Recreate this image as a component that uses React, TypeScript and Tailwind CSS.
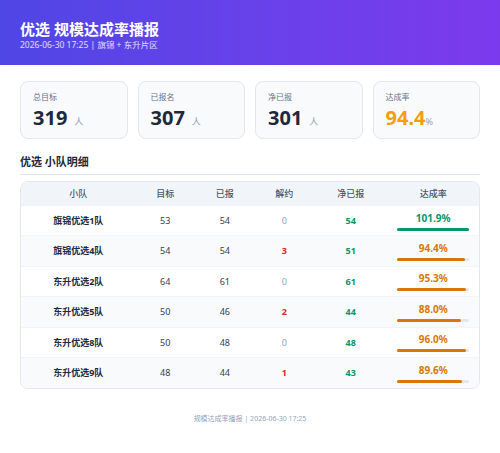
const teams = [
  { name: '旗锦优选1队', target: 53, reported: 54, cancel: 0, net: 54, rate: 101.9 },
  { name: '旗锦优选4队', target: 54, reported: 54, cancel: 3, net: 51, rate: 94.4 },
  { name: '东升优选2队', target: 64, reported: 61, cancel: 0, net: 61, rate: 95.3 },
  { name: '东升优选5队', target: 50, reported: 46, cancel: 2, net: 44, rate: 88.0 },
  { name: '东升优选8队', target: 50, reported: 48, cancel: 0, net: 48, rate: 96.0 },
  { name: '东升优选9队', target: 48, reported: 44, cancel: 1, net: 43, rate: 89.6 },
];

const cols = 'grid grid-cols-[25fr_13fr_13fr_13fr_16fr_20fr] items-center text-center';

function StatCard({ label, value, unit, accent }: { label: string; value: string; unit: string; accent?: boolean }) {
  return (
    <div className="flex h-[58px] flex-1 flex-col rounded-lg border border-[#e2e8f0] bg-[#f8fafc] pl-[12px] pt-[9px]">
      <div className="h-[12px] text-[8px] leading-[12px] text-[#64748b]">{label}</div>
      <div className="mt-[3px] flex h-[24px] items-baseline leading-[24px]">
        <span className={`text-[20px] font-bold leading-[24px] ${accent ? 'text-[#f59e0b]' : 'text-[#1e293b]'}`}>{value}</span>
        <span className={`text-[9px] leading-[24px] text-[#94a3b8] ${accent ? '' : 'ml-[7px]'}`}>{unit}</span>
      </div>
    </div>
  );
}

export default function App() {
  return (
    <div className="min-h-[453px] w-[500px] bg-white font-['Noto_Sans','Noto_Sans_CJK_SC',sans-serif]">
      {/* header */}
      <div className="h-[65px] bg-gradient-to-r from-[#4f46e5] to-[#7c3aed] px-[20px] pt-[20px] text-white">
        <div className="h-[18px] text-[15px] font-bold leading-[18px]">优选 规模达成率播报</div>
        <div className="mt-[1px] h-[12px] text-[8.5px] leading-[12px] text-white/80">2026-06-30 17:25 | 旗锦 + 东升片区</div>
      </div>

      <div className="px-[20px]">
        {/* summary cards */}
        <div className="mt-[16px] flex gap-[10px]">
          <StatCard label="总目标" value="319" unit="人" />
          <StatCard label="已报名" value="307" unit="人" />
          <StatCard label="净已报" value="301" unit="人" />
          <StatCard label="达成率" value="94.4" unit="%" accent />
        </div>

        <div className="mt-[16px] h-[20px] border-b border-[#e2e8f0] text-[11px] font-bold leading-[14px] text-[#1e293b]">
          优选 小队明细
        </div>

        {/* team table */}
        <div className="mt-[6px] overflow-hidden rounded-lg border border-[#e2e8f0]">
          <div className={`${cols} h-[24px] bg-[#f1f5f9] text-[9px] font-medium text-[#475569]`}>
            <div>小队</div>
            <div>目标</div>
            <div>已报</div>
            <div>解约</div>
            <div>净已报</div>
            <div>达成率</div>
          </div>
          {teams.map((t, i) => {
            const good = t.rate >= 100;
            return (
              <div
                key={t.name}
                className={`${cols} h-[30.4px] text-[9px] ${i % 2 === 1 ? 'bg-[#f8fafc]' : 'bg-white'} ${i < teams.length - 1 ? 'border-b border-[#f1f5f9]' : ''}`}
              >
                <div className="font-bold text-[#1e293b]">{t.name}</div>
                <div className="text-[#334155]">{t.target}</div>
                <div className="text-[#334155]">{t.reported}</div>
                <div className={t.cancel > 0 ? 'font-bold text-[#dc2626]' : 'text-[#94a3b8]'}>{t.cancel}</div>
                <div className="font-bold text-[#059669]">{t.net}</div>
                <div className="flex flex-col items-center">
                  <div className={`h-[14px] text-[10px] font-bold leading-[14px] ${good ? 'text-[#059669]' : 'text-[#d97706]'}`}>
                    {t.rate.toFixed(1)}%
                  </div>
                  <div className="mt-[3px] h-[3px] w-[72px] rounded-full bg-[#e2e8f0]">
                    <div
                      className={`h-full rounded-full ${good ? 'bg-[#059669]' : 'bg-[#d97706]'}`}
                      style={{ width: `${Math.min(t.rate, 100)}%` }}
                    />
                  </div>
                </div>
              </div>
            );
          })}
        </div>

        <div className="mt-[25px] text-center text-[7px] leading-[10px] text-[#94a3b8]">规模达成率播报 | 2026-06-30 17:25</div>
      </div>
    </div>
  );
}
